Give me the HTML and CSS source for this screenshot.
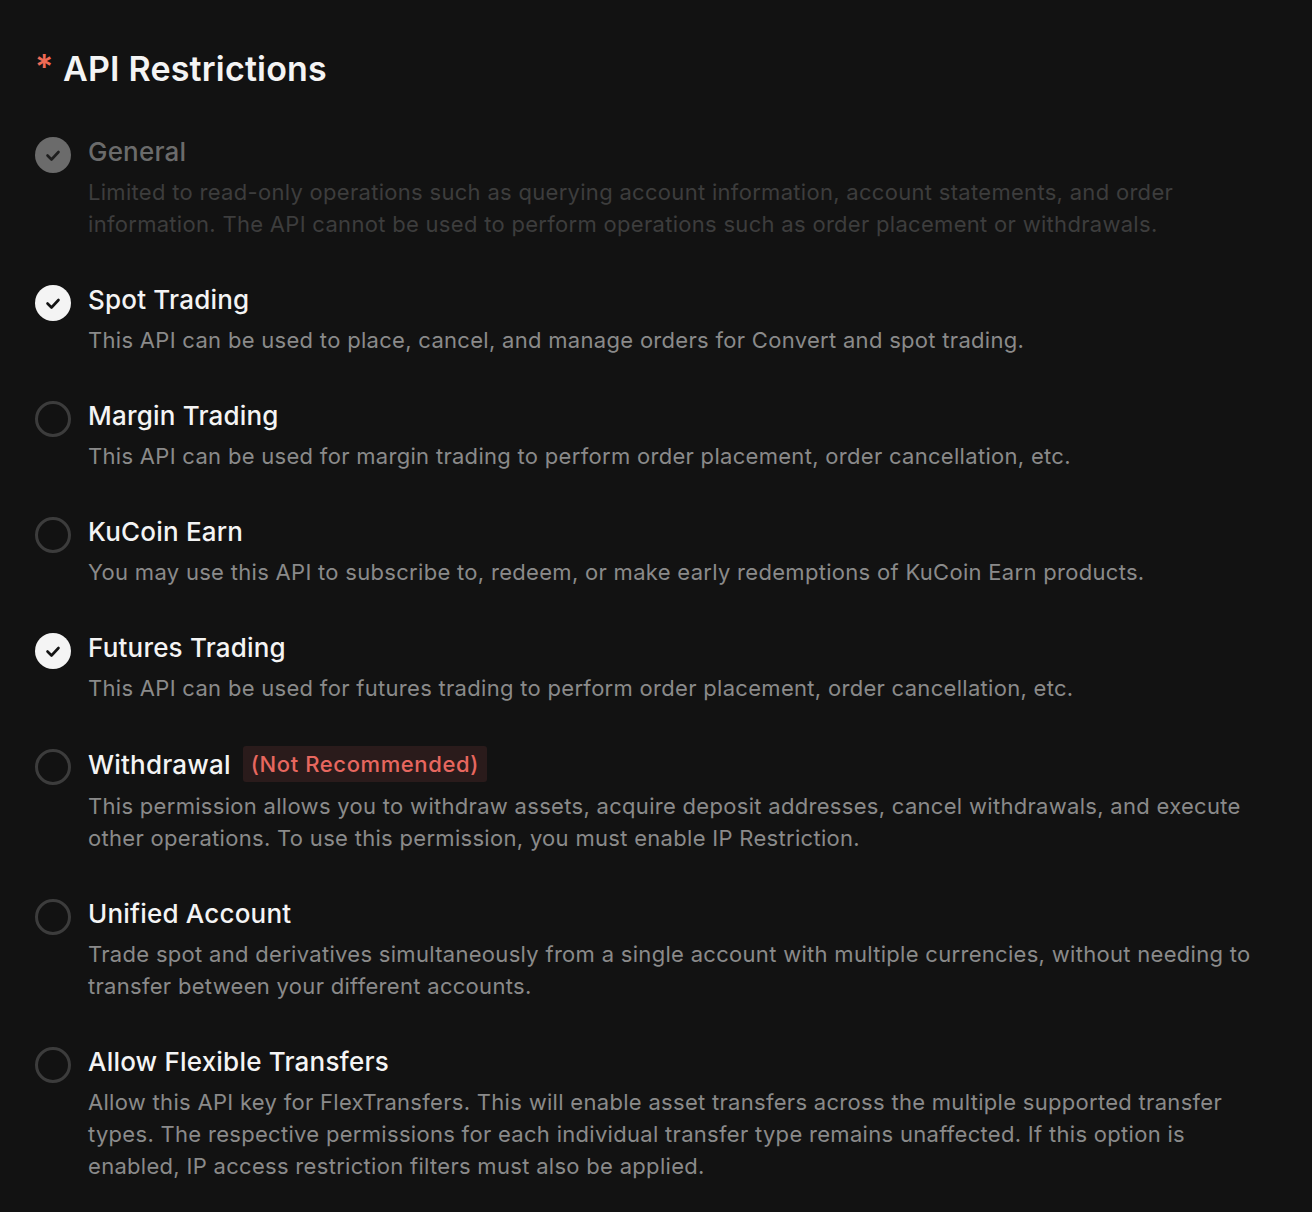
FILE: index.html
```html
<!DOCTYPE html>
<html lang="en">
<head>
<meta charset="utf-8">
<title>API Restrictions</title>
<link rel="stylesheet" href="styles.css">
</head>
<body>
<main class="panel">
  <h2 class="heading"><span class="required">*</span>API Restrictions</h2>
  <ul class="options">
    <li class="option is-locked">
      <span class="check is-checked"><svg viewBox="0 0 36 36"><path d="M12.5 18.5 L16.5 22.5 L23.5 15"/></svg></span>
      <div class="option-body">
        <div class="option-title">General</div>
        <p class="option-desc">Limited to read-only operations such as querying account information, account statements, and order information. The API cannot be used to perform operations such as order placement or withdrawals.</p>
      </div>
    </li>
    <li class="option">
      <span class="check is-checked"><svg viewBox="0 0 36 36"><path d="M12.5 18.5 L16.5 22.5 L23.5 15"/></svg></span>
      <div class="option-body">
        <div class="option-title">Spot Trading</div>
        <p class="option-desc">This API can be used to place, cancel, and manage orders for Convert and spot trading.</p>
      </div>
    </li>
    <li class="option">
      <span class="check"></span>
      <div class="option-body">
        <div class="option-title">Margin Trading</div>
        <p class="option-desc">This API can be used for margin trading to perform order placement, order cancellation, etc.</p>
      </div>
    </li>
    <li class="option">
      <span class="check"></span>
      <div class="option-body">
        <div class="option-title">KuCoin Earn</div>
        <p class="option-desc">You may use this API to subscribe to, redeem, or make early redemptions of KuCoin Earn products.</p>
      </div>
    </li>
    <li class="option">
      <span class="check is-checked"><svg viewBox="0 0 36 36"><path d="M12.5 18.5 L16.5 22.5 L23.5 15"/></svg></span>
      <div class="option-body">
        <div class="option-title">Futures Trading</div>
        <p class="option-desc">This API can be used for futures trading to perform order placement, order cancellation, etc.</p>
      </div>
    </li>
    <li class="option">
      <span class="check"></span>
      <div class="option-body">
        <div class="option-title">Withdrawal <span class="badge">(Not Recommended)</span></div>
        <p class="option-desc">This permission allows you to withdraw assets, acquire deposit addresses, cancel withdrawals, and execute other operations. To use this permission, you must enable IP Restriction.</p>
      </div>
    </li>
    <li class="option">
      <span class="check"></span>
      <div class="option-body">
        <div class="option-title">Unified Account</div>
        <p class="option-desc">Trade spot and derivatives simultaneously from a single account with multiple currencies, without needing to transfer between your different accounts.</p>
      </div>
    </li>
    <li class="option">
      <span class="check"></span>
      <div class="option-body">
        <div class="option-title">Allow Flexible Transfers</div>
        <p class="option-desc">Allow this API key for FlexTransfers. This will enable asset transfers across the multiple supported transfer types. The respective permissions for each individual transfer type remains unaffected. If this option is enabled, IP access restriction filters must also be applied.</p>
      </div>
    </li>
  </ul>
</main>
</body>
</html>
```
FILE: styles.css
```css
* { box-sizing: border-box; }
html, body {
  margin: 0;
  padding: 0;
  background: #121212;
}
body {
  font-family: Inter, "Open Sans", "Liberation Sans", sans-serif;
  color: #f2f2f2;
  min-height: 1212px;
}
.panel {
  padding: 48px 40px 0 35px;
}
.heading {
  margin: 0;
  display: flex;
  align-items: center;
  height: 40px;
  font-size: 34px;
  font-weight: 600;
  letter-spacing: 0.2px;
  color: #f4f4f4;
}
.required {
  color: #ee6a55;
  font-size: 34px;
  width: 28px;
  margin-top: -4px;
}
.options {
  list-style: none;
  margin: 46px 0 0;
  padding: 0;
  display: flex;
  flex-direction: column;
  gap: 42px;
}
.option {
  display: flex;
  gap: 17px;
  align-items: flex-start;
}
.check {
  flex: none;
  width: 36px;
  height: 36px;
  margin-top: 3px;
  border-radius: 50%;
  border: 3px solid #3c3c3c;
  display: flex;
  align-items: center;
  justify-content: center;
}
.check svg {
  width: 36px;
  height: 36px;
  flex: none;
}
.check path {
  fill: none;
  stroke: #141414;
  stroke-width: 2.6;
  stroke-linecap: round;
  stroke-linejoin: round;
}
.check.is-checked {
  border: none;
  background: #f4f4f4;
}
.is-locked .check.is-checked {
  background: #6b6b6b;
}
.is-locked .check path {
  stroke: #1e1e1e;
}
.option-body {
  flex: 1;
  min-width: 0;
}
.option-title {
  display: flex;
  align-items: center;
  gap: 12px;
  min-height: 34px;
  font-size: 26px;
  font-weight: 500;
  letter-spacing: 0.2px;
  color: #f4f4f4;
}
.is-locked .option-title { color: #6b6b6b; }
.badge {
  display: inline-flex;
  align-items: center;
  height: 36px;
  padding: 0 8px;
  border-radius: 3px;
  background: #2a1b1b;
  color: #e7675f;
  font-size: 22px;
  font-weight: 500;
  letter-spacing: 0.6px;
}
.option-desc {
  margin: 8px 0 0;
  font-size: 22px;
  line-height: 32px;
  letter-spacing: 0.3px;
  color: #8a8a8a;
}
.is-locked .option-desc { color: #3d3d3d; }
```
